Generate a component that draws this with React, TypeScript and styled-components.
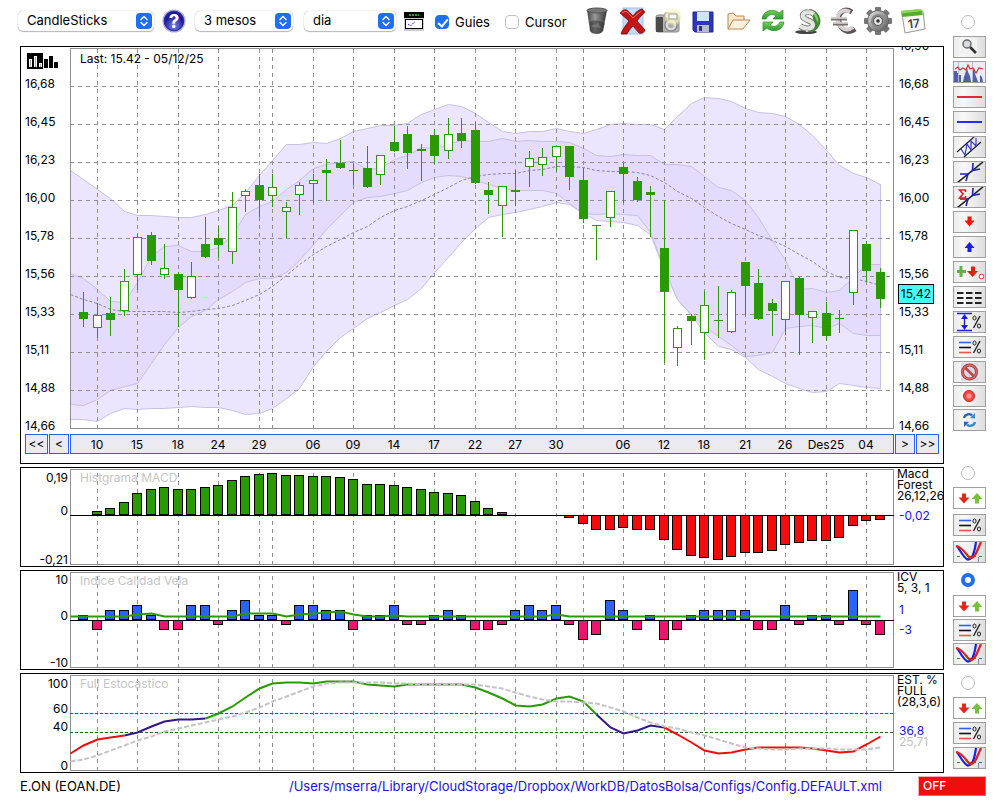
import React from 'react';
import styled, { createGlobalStyle, css } from 'styled-components';

const Global = createGlobalStyle`
  * { box-sizing: border-box; }
  body { margin: 0; background: #fff; color: #000; font: 12px/14px Inter, "Liberation Sans", sans-serif; }
  button, select, input { font: inherit; color: inherit; margin: 0; }
`;

/* ---------- data ---------- */

const LEFT = 70;
const at = (i: number) => LEFT + Math.floor(13.5 * (i + 1));

const grid = [97, 137, 178, 218, 259, 272, 313, 353, 394, 434, 475, 515, 556, 583, 623, 664, 704, 745, 785, 826, 866];

const days: [number, string][] = [
  [97, '10'], [137, '15'], [178, '18'], [218, '24'], [259, '29'], [313, '06'], [353, '09'], [394, '14'],
  [434, '17'], [475, '22'], [515, '27'], [556, '30'], [623, '06'], [664, '12'], [704, '18'], [745, '21'],
  [785, '26'], [826, 'Des25'], [866, '04'],
];

const prices = ['16,68', '16,45', '16,23', '16,00', '15,78', '15,56', '15,33', '15,11', '14,88', '14,66'];

// high, body top, body bottom, low, filled
const candles = [
  [292, 312, 319, 327, 1], [303, 315, 328, 338, 0], [297, 313, 320, 336, 1], [269, 281, 311, 316, 0],
  [234, 237, 275, 290, 0], [232, 235, 261, 265, 1], [244, 268, 275, 279, 0], [272, 274, 290, 327, 1],
  [262, 276, 298, 299, 0], [217, 244, 257, 258, 1], [226, 238, 245, 258, 1], [192, 207, 252, 264, 0],
  [189, 191, 196, 212, 0], [174, 185, 200, 217, 1], [174, 187, 196, 207, 0], [202, 207, 212, 238, 0],
  [182, 185, 195, 215, 0], [174, 180, 184, 203, 0], [159, 170, 173, 201, 1], [140, 163, 168, 169, 1],
  [164, 170, 171, 185, 1], [146, 168, 187, 188, 1], [155, 155, 175, 185, 0], [126, 142, 151, 152, 1],
  [126, 134, 153, 169, 1], [144, 149, 151, 181, 1], [129, 135, 156, 164, 1], [118, 134, 151, 159, 0],
  [118, 133, 141, 148, 1], [122, 130, 183, 184, 1], [182, 190, 195, 214, 1], [186, 186, 206, 237, 0],
  [170, 190, 192, 206, 1], [151, 158, 167, 187, 0], [148, 157, 165, 176, 0], [146, 146, 157, 171, 0],
  [146, 146, 177, 190, 1], [168, 180, 219, 223, 1], [225, 225, 226, 260, 1], [191, 191, 218, 227, 0],
  [163, 167, 174, 203, 1], [177, 181, 200, 202, 1], [186, 192, 195, 237, 1], [200, 248, 292, 363, 1],
  [326, 328, 348, 366, 0], [314, 316, 321, 345, 1], [291, 305, 333, 360, 0], [286, 320, 321, 338, 1],
  [290, 292, 332, 333, 0], [262, 262, 286, 315, 1], [269, 283, 319, 320, 1], [299, 303, 311, 336, 1],
  [281, 281, 320, 335, 0], [277, 278, 315, 355, 1], [311, 311, 318, 343, 0], [302, 313, 336, 341, 1],
  [310, 318, 319, 333, 1], [230, 230, 293, 305, 0], [241, 244, 271, 282, 1], [268, 272, 299, 308, 1],
];

// one value per session, starting at the left edge of the plot
const outerTop = [
  170, 179, 189, 198, 211, 215, 215, 216, 217, 217, 214, 210, 205, 192, 175, 160, 144, 144, 142, 143, 138,
  131, 128, 125, 125, 123, 114, 109, 104, 106, 113, 122, 131, 133, 131, 131, 128, 131, 133, 129, 124,
  123, 124, 124, 129, 116, 103, 97, 98, 101, 108, 112, 113, 116, 124, 135, 150, 165, 173, 177, 184,
];
const outerBottom = [
  419, 419, 421, 413, 408, 409, 408, 408, 407, 406, 407, 407, 410, 414, 413, 408, 398, 388, 366, 351, 337,
  328, 318, 312, 305, 299, 288, 272, 257, 242, 228, 217, 214, 212, 209, 206, 202, 204, 213, 220, 221,
  222, 225, 234, 270, 299, 315, 332, 346, 349, 357, 369, 376, 383, 388, 392, 391, 383, 385, 387, 388,
];
const innerTop = [
  273, 278, 289, 301, 302, 282, 256, 246, 245, 251, 251, 247, 235, 214, 206, 201, 189, 180, 168, 164, 162,
  161, 169, 168, 159, 155, 147, 148, 144, 140, 141, 141, 138, 141, 140, 141, 141, 142, 148, 155, 156,
  154, 155, 155, 164, 164, 166, 176, 187, 190, 200, 217, 240, 260, 289, 288, 292, 290, 277, 264, 264,
];
const innerBottom = [
  404, 405, 399, 390, 386, 383, 363, 344, 327, 316, 310, 299, 291, 282, 278, 278, 272, 260, 244, 229, 215,
  202, 197, 196, 193, 190, 182, 177, 175, 176, 180, 184, 188, 190, 190, 190, 193, 203, 213, 214, 213,
  214, 215, 232, 268, 299, 314, 326, 336, 345, 356, 355, 352, 328, 326, 325, 328, 323, 333, 335, 335,
];
const middle = [
  294, 299, 303, 309, 311, 311, 311, 311, 312, 311, 309, 308, 305, 300, 294, 286, 275, 264, 254, 246, 239,
  232, 226, 217, 210, 206, 200, 194, 187, 180, 176, 174, 173, 173, 170, 169, 166, 166, 167, 170, 171,
  171, 172, 175, 182, 191, 198, 207, 216, 223, 229, 235, 240, 246, 254, 261, 271, 277, 278, 281, 285,
];

const macd = [
  0, 4, 7, 13, 22, 26, 28, 26, 26, 28, 30, 35, 39, 41, 42, 40, 40, 39, 39, 38, 36, 31, 31, 30, 28, 26, 23, 22,
  20, 14, 7, 3, 0, 0, 0, 0, -3, -9, -15, -15, -13, -15, -15, -25, -35, -41, -43, -45, -42, -38, -38, -36, -30,
  -28, -26, -26, -23, -11, -6, -5,
];
const icv = [
  1, -2, 2, 2, 3, 1, -2, -2, 3, 3, -1, 2, 4, 1, 1, -1, 3, 3, 2, 2, -2, 1, 1, 3, -1, -1, 1, 2, 1, -2, -2, -1,
  2, 3, 2, 3, -1, -4, -3, 4, 2, -2, 1, -4, -2, 1, 2, 2, 2, 2, -2, -2, 3, -1, 1, 1, -1, 6, -1, -3,
];
const icvLine = Array.from({ length: 61 }, (_, k) =>
  ({ 5: 614, 6: 613, 13: 613, 14: 613, 15: 613, 17: 614, 18: 613, 19: 612, 20: 611, 21: 614, 24: 615, 36: 614 } as Record<number, number>)[k] ?? 616);

const stoch = [
  753, 745, 739, 737, 735, 732, 726, 721, 719, 719, 718, 713, 706, 697, 688, 683, 682, 682, 683, 681, 681,
  681, 684, 685, 686, 684, 684, 684, 684, 684, 687, 692, 698, 705, 706, 704, 698, 696, 701, 714, 727,
  733, 730, 725, 727, 734, 742, 750, 753, 752, 749, 747, 747, 747, 747, 748, 750, 752, 751, 744, 736,
];
const signal = [
  761, 759, 755, 750, 745, 740, 736, 731, 728, 725, 722, 719, 716, 712, 707, 701, 696, 691, 686, 683, 682,
  682, 682, 682, 683, 683, 684, 684, 684, 684, 684, 686, 688, 692, 696, 699, 701, 701, 702, 703, 707,
  711, 717, 722, 726, 728, 732, 735, 739, 743, 747, 748, 749, 749, 748, 748, 748, 749, 749, 749, 747,
];

const points = (ys: number[], from = 0) => ys.map((y, k) => `${at(k + from - 1) + 0.5},${y + 0.5}`);
const line = (ys: number[], from = 0) => points(ys, from).join(' ');
const band = (top: number[], bottom: number[]) => [...points(top), ...points(bottom).reverse()].join(' ');

/* ---------- layout ---------- */

const Page = styled.div`
  display: grid;
  grid-template-columns: minmax(0, 1fr) 33px;
  column-gap: 9px;
  padding: 0 14px 4px 20px;
`;
const Main = styled.main`
  display: flex;
  flex-direction: column;
`;
const Toolbar = styled.header`
  display: flex;
  align-items: center;
  height: 46px;
  margin-left: -2px;
  padding-bottom: 4px;
`;
const Panels = styled.div`
  display: grid;
  gap: 3px;
`;
const Panel = styled.section`
  border: 1px solid #000;
  overflow: hidden;
`;
const PlotRow = styled.div`
  display: grid;
  grid-template-columns: 49px minmax(0, 1fr) 49px;
`;
const Plot = styled.div`
  position: relative;
`;
const Drawing = styled.svg<{ $height: number }>`
  display: block;
  width: 100%;
  height: ${p => p.$height}px;
`;
const Title = styled.h2<{ $dim?: boolean }>`
  position: absolute;
  top: ${p => (p.$dim ? 3 : 5)}px;
  left: 10px;
  margin: 0;
  font-size: 12px;
  line-height: 14px;
  font-weight: 400;
  color: ${p => (p.$dim ? '#c4c4c4' : '#000')};
`;

/* ---------- price panel ---------- */

const PriceAxis = styled.div<{ $right?: boolean }>`
  position: relative;
  height: 382px;
  padding-left: ${p => (p.$right ? 5 : 4)}px;
  line-height: 38px;
`;
const PriceIcon = styled.div`
  height: 18px;
  padding: 6px 2px;
  line-height: 0;
`;
const PriceLabel = styled.div<{ $cut?: boolean }>`
  height: 38px;
  ${p => p.$cut && css`margin-top: -20px;`}
`;
const LastPrice = styled.output`
  position: absolute;
  top: 237px;
  left: 4px;
  width: 36px;
  height: 20px;
  border: 1px solid #000;
  background: #48fbfb;
  line-height: 18px;
  text-align: center;
`;
const DateRow = styled.nav`
  display: grid;
  grid-template-columns: 23px 20px minmax(0, 1fr) 20px 23px;
  gap: 1px;
  padding: 5px 4px 9px;
`;
const DateButton = styled.button`
  height: 20px;
  padding: 0;
  border: 1px solid #2a62f0;
  background: #eaeaf0;
  line-height: 18px;
`;
const DateStrip = styled.div`
  border: 1px solid #2a62f0;
  background: #eaeaf0;
`;

/* ---------- indicator panels ---------- */

const ValueAxis = styled.div<{ $rows: string }>`
  display: grid;
  grid-template-rows: ${p => p.$rows};
  align-items: end;
  justify-items: end;
  padding-right: 2px;
  line-height: 12px;
`;
const Legend = styled.div`
  padding-left: 3px;
  line-height: 11px;
  white-space: pre;
`;
const Reading = styled.div<{ $gap: number; $color?: string }>`
  margin-top: ${p => p.$gap}px;
  padding-left: 2px;
  color: ${p => p.$color ?? '#1a10f0'};
`;

/* ---------- toolbar parts ---------- */

const Picker = styled.label<{ $width: number; $gap: number }>`
  display: grid;
  width: ${p => p.$width}px;
  height: 20px;
  margin-right: ${p => p.$gap}px;
  > * { grid-area: 1 / 1; }
  svg { justify-self: end; align-self: center; margin-right: 2px; pointer-events: none; }
`;
const Select = styled.select`
  appearance: none;
  width: 100%;
  height: 20px;
  padding: 0 24px 2px 9px;
  border: 0;
  border-radius: 5px;
  background: #fff;
  box-shadow: 0 0 1px rgba(0, 0, 0, 0.45), 0 1px 1px rgba(0, 0, 0, 0.25);
  font-size: 13px;
`;
const IconButton = styled.button<{ $width: number; $gap?: number }>`
  width: ${p => p.$width}px;
  height: 30px;
  margin-right: ${p => p.$gap ?? 0}px;
  padding: 0;
  border: 0;
  background: none;
  display: flex;
  align-items: center;
  justify-content: center;
  flex: none;
`;
const Check = styled.label<{ $width: number }>`
  display: flex;
  align-items: center;
  gap: 6px;
  width: ${p => p.$width}px;
  padding-top: 2px;
  font-size: 13px;
`;
const CheckBox = styled.input`
  appearance: none;
  width: 14px;
  height: 14px;
  border: 1px solid #c2c2c2;
  border-radius: 4px;
  display: grid;
  &:checked { border-color: #1f6ef6; background: #1f6ef6; }
  &:checked::after {
    content: '';
    width: 4px;
    height: 8px;
    margin: 1px 4px;
    border: solid #fff;
    border-width: 0 2px 2px 0;
    transform: rotate(40deg);
  }
`;
const Tools = styled.div`
  display: flex;
  margin-left: auto;
  padding-right: 14px;
`;

/* ---------- side column ---------- */

const Side = styled.aside`
  display: flex;
  flex-direction: column;
`;
const Group = styled.div<{ $top: number; $gap: number }>`
  display: grid;
  gap: ${p => p.$gap}px;
  margin-top: ${p => p.$top}px;
`;
const Radio = styled.input<{ $top: number }>`
  appearance: none;
  width: 14px;
  height: 14px;
  margin: ${p => p.$top}px auto 0 8px;
  border: 1px solid #b8b8b8;
  border-radius: 50%;
  background: #fff;
  &:checked { border: 4px solid #1f6ef6; }
`;
const SideButton = styled.button<{ $white?: boolean }>`
  height: 22px;
  padding: 0;
  border: 1px solid #a0a0a0;
  background: ${p => (p.$white ? '#fff' : 'linear-gradient(90deg, #ebebeb, #f8f8f8 30%, #dedede)')};
  svg { display: block; }
`;

/* ---------- footer ---------- */

const Footer = styled.footer`
  display: flex;
  justify-content: space-between;
  grid-column: 1 / -1;
  padding-top: 3px;
  font-size: 13px;
  line-height: 20px;
`;
const FilePath = styled.a`
  margin-left: auto;
  margin-right: 36px;
  color: #1a10e8;
  text-decoration: none;
`;
const OffButton = styled.button`
  width: 68px;
  height: 20px;
  padding: 0 4px;
  border: 1px solid #8a8a8a;
  border-top-color: #f5b0b0;
  border-left-color: #f5b0b0;
  background: #f20c0c;
  color: #fff;
  font-size: 12px;
  font-weight: 500;
  line-height: 16px;
  text-align: left;
`;

/* ---------- side icons, drawn on 31x20 ---------- */

const percent = (
  <g stroke="#222" fill="none">
    <path d="M19.5 16 26 4" strokeWidth="1.4" />
    <ellipse cx="20.5" cy="6" rx="1.6" ry="2" />
    <ellipse cx="25" cy="14" rx="1.6" ry="2" />
  </g>
);
const cross = (
  <>
    <path d="M3 21 29 0" stroke="#222" strokeWidth="1.6" />
    <path d="M6 12 14 12 12 19M19 1 18.500 8.500 26 7" stroke="#22b" strokeWidth="1.600" fill="none" />
  </>
);
const percentLines = (
  <>
    <path d="M5 5.500H17" stroke="#2a62f0" strokeWidth="1.600" />
    <path d="M5 10.500H17" stroke="#111" strokeWidth="1.600" />
    <path d="M5 15.500H17" stroke="#ef5442" strokeWidth="1.600" />
    {percent}
  </>
);
const arrows = (
  <>
    <path d="M8 5.500H12V9.500H15.500L10 15.500 4.500 9.500H8Z" fill="#e0281c" />
    <path d="M21 15.500H25V11H28.500L23 5 17.500 11H21Z" fill="#76c23c" />
  </>
);
const curves = (
  <>
    <path d="M3 14.500H29" stroke="#2d8a3a" strokeDasharray="3 4 1 3" />
    <path d="M24.500 15v5" stroke="#88a" />
    <path d="M3 4C6 8 9 15 13.500 17.500 18 18 20 11 21 6L22 0" stroke="#1424e8" strokeWidth="2.200" fill="none" />
    <path d="M2 4C8 5 12 12 15 15 19 18 22 12 24 7L27 0" stroke="#e02020" strokeWidth="2.200" fill="none" />
  </>
);

const sideIcons: Record<string, React.ReactNode> = {
  'Zoom': (
    <>
      <rect x="7" y="2" width="16" height="16" fill="#f2f2f2" />
      <path d="M16 10 22 16" stroke="#333" strokeWidth="2.600" />
      <circle cx="13" cy="7" r="4" fill="#d8dce0" stroke="#666" strokeWidth="1.400" />
    </>
  ),
  'Histogram': (
    <>
      <rect width="31" height="20" fill="#ececf4" />
      <path d="M0 20V9H3V11H5V13H7V20H9L10 15 12 9 13 6 14 10 16 14 17 20H19V9L20 6 21 12 23 17 24 20H26V13L28 15 29 20Z" fill="#5160a8" />
      <path d="M4.500 0V20M18.500 0V20" stroke="#b4b8d8" />
      <path d="M1 7 4 5 6 8 9 6 12 8 14 3 16 7 19 6 22 11 25 6 29 7" stroke="#dc3030" fill="none" strokeWidth="1.200" />
    </>
  ),
  'Red line': <path d="M3 10H28" stroke="#e12b2b" strokeWidth="2" />,
  'Blue line': <path d="M3 10H28" stroke="#2230f0" strokeWidth="2" />,
  'Channel': (
    <>
      <path d="M3 15 20 0M10 20 27 5" stroke="#222" strokeWidth="1.300" />
      <path d="M7 12 11 18 13 7 17 13 17 4 22 9 22 1" stroke="#2a2ad0" fill="none" strokeWidth="1.100" />
    </>
  ),
  'Trend line': cross,
  'Regression line': (
    <>
      {cross}
      <path d="M11.500 5V3H5.500L9 7 5.500 11H11.500V9" stroke="#e01c1c" strokeWidth="1.600" fill="none" />
    </>
  ),
  'Sell mark': <path d="M13.500 4.500H17.500V8.500H20.500L15.500 14.500 10.500 8.500H13.500Z" fill="#f0140c" />,
  'Buy mark': <path d="M13.500 15H17.500V11H20.500L15.500 5 10.500 11H13.500Z" fill="#1c1cf0" />,
  'Signals': (
    <>
      <path d="M7 4V15M3 9.500H12" stroke="#68ae44" strokeWidth="3" />
      <path d="M17 4.500H21V9H24L18.500 15 13 9H17Z" fill="#e0200f" />
      <circle cx="27.500" cy="14.500" r="2.300" stroke="#e03030" fill="#fff" />
    </>
  ),
  'Dashes': <path d="M3 6H28M3 11H28M3 16H28" stroke="#222" strokeWidth="1.800" strokeDasharray="6.500 2.500" />,
  'Range percent': (
    <>
      <path d="M3 1.500H18M3 18.500H18M10.500 4V16" stroke="#1c1cf0" strokeWidth="1.400" />
      <path d="M10.500 2 14 7H7ZM10.500 18 14 13H7Z" fill="#1c1cf0" />
      {percent}
    </>
  ),
  'Levels percent': percentLines,
  'Forbid': (
    <>
      <rect x="7" y="1" width="17" height="18" fill="#d6dae6" />
      <circle cx="15.500" cy="10" r="7" fill="none" stroke="#a83434" strokeWidth="3" />
      <circle cx="15.500" cy="10" r="7" fill="none" stroke="#d66c6c" strokeWidth="1.400" />
      <path d="M11 5.500 20 14.500" stroke="#c04a4a" strokeWidth="2.600" />
    </>
  ),
  'Record': (
    <>
      <circle cx="15" cy="10" r="5.500" fill="#f04848" stroke="#d81c1c" />
      <circle cx="15" cy="10" r="2.600" fill="#f79292" />
    </>
  ),
  'Sync': (
    <>
      <path d="M10 8C11 4 16 3 18 5.500" stroke="#2a62b8" strokeWidth="2.400" fill="none" />
      <path d="M16 8 21 8.500 21 3Z" fill="#3a86d8" />
      <path d="M21 12C20 16 15 17 13 14.500" stroke="#2f8ad8" strokeWidth="2.400" fill="none" />
      <path d="M15 12 10 11.500 10 17Z" fill="#2a62b8" />
    </>
  ),
};

const SideIcon = ({ name, white, children }: { name: string; white?: boolean; children: React.ReactNode }) => (
  <SideButton type="button" aria-label={name} $white={white}>
    <svg width="31" height="20" viewBox="0 0 31 20">{children}</svg>
  </SideButton>
);

const IndicatorTools = ({ top, buttonsTop, gap, name, checked }: { top: number; buttonsTop: number; gap: number; name: string; checked?: boolean }) => (
  <>
    <Radio type="radio" name="panel" aria-label={name} $top={top} defaultChecked={checked} />
    <Group $top={buttonsTop} $gap={gap}>
      <SideIcon name={`${name} signals`} white>{arrows}</SideIcon>
      <SideIcon name={`${name} levels`}>{percentLines}</SideIcon>
      <SideIcon name={`${name} curves`}>{curves}</SideIcon>
    </Group>
  </>
);

/* ---------- toolbar icons ---------- */

const Gradients = () => (
  <svg width="0" height="0" style={{ position: 'absolute' }} aria-hidden="true">
    <defs>
      <linearGradient id="metal" x2="1" y2="1"><stop offset="0" stopColor="#eee" /><stop offset=".5" stopColor="#999" /><stop offset="1" stopColor="#555" /></linearGradient>
      <linearGradient id="bin"><stop offset="0" stopColor="#444" /><stop offset=".4" stopColor="#999" /><stop offset="1" stopColor="#333" /></linearGradient>
      <linearGradient id="green" x2="0" y2="1"><stop offset="0" stopColor="#7cd25a" /><stop offset="1" stopColor="#259a2c" /></linearGradient>
      <radialGradient id="ball" cy=".75"><stop offset="0" stopColor="#7d86f0" /><stop offset="1" stopColor="#1d1c96" /></radialGradient>
      <radialGradient id="flash"><stop offset="0" stopColor="#fffef0" /><stop offset=".65" stopColor="#f5f3b8" /><stop offset="1" stopColor="#efe9a0" stopOpacity=".2" /></radialGradient>
    </defs>
  </svg>
);

const Stepper = () => (
  <svg width="16" height="16" viewBox="0 0 16 16" aria-hidden="true">
    <rect width="16" height="16" rx="4" fill="#1f6ef6" />
    <path d="M5 6.500 8 3.500 11 6.500M5 9.500 8 12.500 11 9.500" stroke="#fff" strokeWidth="1.400" fill="none" strokeLinecap="round" strokeLinejoin="round" />
  </svg>
);

const teeth = Array.from({ length: 8 }, (_, k) => k * 45);

const toolIcons: [string, React.ReactNode][] = [
  ['Delete', (
    <>
      <path d="M3 3 6 24C8 28 17 28 19 24L23 3Z" fill="url(#bin)" />
      <ellipse cx="13" cy="3.500" rx="10" ry="2.500" fill="#777" stroke="#555" />
      <path d="M6 15C10 12 17 14 21 16L19 24C16 28 9 28 6 24Z" fill="#2b2b2b" opacity=".5" />
      <path d="M7 20C10 15 13 20 14 15L17 21Z" fill="#999" opacity=".4" />
    </>
  )],
  ['Remove all', (
    <>
      <rect x="4" y="1" width="20" height="26" fill="#c2dcfb" stroke="#9cc2f2" />
      <path d="M1 6C3 3 6 2 8 3L14 9C16 6 19 3 23 2L26 5C23 8 20 11 18 14L26 23C26 25 22 27 20 26L14 19C11 22 9 25 8 27H2C3 23 7 18 10 14Z" fill="#c41414" stroke="#7a0a0a" strokeWidth=".800" />
      <path d="M3 6 7 4 14 11 22 4" stroke="#ee7468" fill="none" />
    </>
  )],
  ['Snapshot', (
    <>
      <rect x="2" y="8" width="23" height="17" rx="2" fill="#b4b4b0" stroke="#8a8a86" />
      <rect x="2" y="10" width="7" height="15" fill="#4a4a48" />
      <rect x="11" y="6" width="10" height="5" fill="#eee" stroke="#999" />
      <circle cx="17" cy="18" r="6" fill="#ddd" stroke="#888" strokeWidth="1.400" />
      <circle cx="17" cy="18" r="3" fill="#aaa" />
      <circle cx="19" cy="10" r="9" fill="url(#flash)" opacity=".75" />
      <rect x="15" y="7" width="8" height="5" fill="#fff" stroke="#999" />
    </>
  )],
  ['Save', (
    <>
      <path d="M4 5H24V25H6L4 23Z" fill="#2f36b8" stroke="#22268c" />
      <rect x="8" y="5" width="12" height="9" fill="#cfe6fa" />
      <rect x="8" y="18" width="12" height="7" fill="#b8bccc" />
      <rect x="10" y="19" width="3" height="5" fill="#2b2f9e" />
    </>
  )],
  ['Open', (
    <>
      <path d="M4 22V7L9 6 12 9H20V13" fill="#fbe8cc" stroke="#b98a50" strokeLinejoin="round" />
      <path d="M4 22 9 13H26L19 22Z" fill="#fdf1de" stroke="#b98a50" strokeLinejoin="round" />
    </>
  )],
  ['Reload', (
    <>
      <path d="M3 12C4 3 15 1 20 6L24 3V12H14L17 9C13 6 9 8 7 12Z" fill="url(#green)" stroke="#2c8a2a" strokeWidth=".700" />
      <path d="M25 15C24 24 13 26 8 21L4 24V15H14L11 18C15 21 19 19 21 15Z" fill="url(#green)" stroke="#2c8a2a" strokeWidth=".700" />
    </>
  )],
  ['Dollar', (
    <>
      <ellipse cx="12" cy="25" rx="11" ry="2" fill="#222" opacity=".85" />
      <path d="M16 2C24 4 28 11 26 17 24 23 19 26 14 25L20 15Z" fill="#3f8a2c" />
      <path d="M17 3C23 6 25 11 24 16L20 8Z" fill="#8cc47a" />
      <path d="M20 7C14 3 7 6 9 10 11 14 19 13 19 18 18 23 10 22 6 19" stroke="#6c7068" strokeWidth="6" fill="none" />
      <path d="M20 7C14 3 7 6 9 10 11 14 19 13 19 18 18 23 10 22 6 19" stroke="#e2e6de" strokeWidth="4.200" fill="none" />
      <path d="M14 2V5M13 22V25" stroke="#c8ccc4" strokeWidth="2.400" />
    </>
  )],
  ['Euro', (
    <>
      <path d="M23 5C15 0 8 6 10 15 12 24 20 27 26 22" stroke="#5a5456" strokeWidth="5" fill="none" />
      <path d="M21 5C14 1 7 6 9 14 11 22 18 25 24 20" stroke="#d6d2d4" strokeWidth="4" fill="none" />
      <path d="M2 12H18M4 17H19" stroke="#77706f" strokeWidth="3" />
      <path d="M2 11H18M4 16H19" stroke="#dcd8da" strokeWidth="1.600" />
    </>
  )],
  ['Settings', (
    <>
      {teeth.map(a => <rect key={a} x="11" y="0" width="6" height="8" rx="1" fill="#777" transform={`rotate(${a} 14 14)`} />)}
      <circle cx="14" cy="14" r="10.500" fill="url(#metal)" stroke="#666" />
      <circle cx="14" cy="14" r="7" fill="#8a8a8a" />
      <circle cx="14" cy="14" r="4.500" fill="#e4e4e4" stroke="#555" />
      <circle cx="14" cy="14" r="1.800" fill="#333" />
    </>
  )],
  ['Calendar', (
    <>
      <path d="M3 7 24 4 26 22 6 26Z" fill="#fafafa" stroke="#999" />
      <path d="M2 4 22 2 24 8 3 10Z" fill="#58ac2c" />
      <path d="M2 4 22 2 22.500 4 2.500 6.500Z" fill="#8ed65a" />
      <text x="15" y="21" fontSize="12" fontWeight="600" textAnchor="middle" fill="#444" transform="rotate(-7 14 17)">17</text>
    </>
  )],
];

/* ---------- chart pieces ---------- */

const Grid = ({ top, bottom }: { top: number; bottom: number }) => (
  <g stroke="#8f8f8f" strokeDasharray="4 4" shapeRendering="crispEdges">
    {grid.map(x => <path key={x} d={`M${x + 0.5} ${top}V${bottom}`} />)}
  </g>
);
const Frame = ({ top, bottom }: { top: number; bottom: number }) => (
  <path d={`M70.500 ${top + 0.5}H893.500V${bottom + 0.5}H70.500Z`} fill="none" stroke="#8f8f8f" shapeRendering="crispEdges" />
);
const Bars = ({ heights, zero, up, down }: { heights: number[]; zero: number; up: string; down: string }) => (
  <g stroke="#000" shapeRendering="crispEdges">
    {heights.map((h, i) => h !== 0 && (
      <rect key={i} x={at(i) - 4.5} y={(h > 0 ? zero - h : zero) + 0.5} width="9" height={h > 0 ? h - 1 : -h - 1} fill={h > 0 ? up : down} />
    ))}
    <path d={`M70 ${zero + 0.5}H894`} />
  </g>
);
const Chart = ({ top, height, children }: { top: number; height: number; children: React.ReactNode }) => (
  <Drawing $height={height} viewBox={`70 ${top} 824 ${height}`} preserveAspectRatio="none" aria-hidden="true">{children}</Drawing>
);

const PriceChart = () => (
  <Chart top={47} height={382}>
    <polygon points={band(outerTop, outerBottom)} fill="#ebe6fe" stroke="#c6c1e4" />
    <polygon points={band(innerTop, innerBottom)} fill="#e4dbfd" stroke="#c6c1e4" />
    <Grid top={49} bottom={430} />
    <g stroke="#8f8f8f" strokeDasharray="4 4" shapeRendering="crispEdges">
      {prices.slice(0, 9).map((p, k) => <path key={p} d={`M70 ${86.5 + 38 * k}H894`} />)}
    </g>
    <Frame top={48} bottom={428} />
    <polyline points={line(middle)} fill="none" stroke="#8b84a0" strokeDasharray="3 2" />
    <g stroke="#2a9a04" shapeRendering="crispEdges">
      {candles.map(([high, top, bottom, low, filled], i) => (
        <g key={i}>
          <path d={`M${at(i) + 0.5} ${high}V${low}`} />
          <rect x={at(i) - 3.5} y={top + 0.5} width="8" height={bottom - top - 1} fill={filled ? '#2a9a04' : '#fff'} />
          {bottom - top === 1 && <path d={`M${at(i) - 4} ${top + 0.5}H${at(i) + 5}`} />}
        </g>
      ))}
    </g>
  </Chart>
);

const stochRuns: [number, number, string][] = [[0, 4, '#f20c0c'], [4, 10, '#33168a'], [10, 39, '#2a9a04'], [39, 44, '#33168a'], [44, 60, '#f20c0c']];

const options = (items: string[]) => items.map(o => <option key={o}>{o}</option>);

export default function App() {
  return (
    <>
      <Global />
      <Gradients />
      <Page>
        <Main>
          <Toolbar>
            <Picker $width={136} $gap={8}>
              <Select aria-label="Chart type">{options(['CandleSticks'])}</Select>
              <Stepper />
            </Picker>
            <IconButton type="button" aria-label="Help" $width={24} $gap={9}>
              <svg width="24" height="24" viewBox="0 0 24 24">
                <circle cx="12" cy="12" r="11.500" fill="#a5a8dc" />
                <circle cx="12" cy="12" r="9.800" fill="url(#ball)" stroke="#2a2a9c" />
                <text x="12" y="19" fontSize="19" fontWeight="700" textAnchor="middle" fill="#fff">?</text>
              </svg>
            </IconButton>
            <Picker $width={98} $gap={11}>
              <Select aria-label="Period">{options(['3 mesos'])}</Select>
              <Stepper />
            </Picker>
            <Picker $width={92} $gap={8}>
              <Select aria-label="Interval">{options(['dia'])}</Select>
              <Stepper />
            </Picker>
            <IconButton type="button" aria-label="Play" $width={20} $gap={11}>
              <svg width="20" height="19" viewBox="0 0 20 19">
                <rect width="20" height="19" fill="#ccc" />
                <rect width="20" height="6" fill="#000" />
                <path d="M5 3H15" stroke="#2ca02c" strokeDasharray="2 1" strokeWidth="2" />
                <rect x="1.500" y="7.500" width="17" height="9" fill="#fff" stroke="#000" />
                <path d="M4 12 6.500 14 11 9.500" stroke="#2222e0" fill="none" strokeDasharray="2 1" />
              </svg>
            </IconButton>
            <Check $width={70}><CheckBox type="checkbox" defaultChecked />Guies</Check>
            <Check $width={70}><CheckBox type="checkbox" />Cursor</Check>
            <Tools>
              {toolIcons.map(([name, icon]) => (
                <IconButton key={name} type="button" aria-label={name} $width={35}>
                  <svg width="28" height="28" viewBox="0 0 28 28">{icon}</svg>
                </IconButton>
              ))}
            </Tools>
          </Toolbar>

          <Panels>
            <Panel aria-label="Price">
              <PlotRow>
                <PriceAxis>
                  <PriceIcon>
                    <svg width="32" height="16" viewBox="0 0 32 16" shapeRendering="crispEdges">
                      <rect width="16" height="16" />
                      <path d="M2 6H5V14H2ZM7 3H10V14H7ZM12 10H15V14H12Z" fill="#fff" />
                      <path d="M3 7H4V14H3ZM8 4H9V14H8ZM13 11H14V14H13Z" fill="#aaa" />
                      <path d="M17 6H21V15H17ZM22 3H26V15H22ZM27 9H31V15H27Z" />
                    </svg>
                  </PriceIcon>
                  {prices.map(p => <PriceLabel key={p}>{p}</PriceLabel>)}
                </PriceAxis>
                <Plot>
                  <PriceChart />
                  <Title>Last: 15.42 - 05/12/25</Title>
                </Plot>
                <PriceAxis $right>
                  <PriceLabel $cut>16,90</PriceLabel>
                  {prices.map(p => <PriceLabel key={p}>{p}</PriceLabel>)}
                  <LastPrice>15,42</LastPrice>
                </PriceAxis>
              </PlotRow>
              <DateRow aria-label="Dates">
                <DateButton type="button">&lt;&lt;</DateButton>
                <DateButton type="button">&lt;</DateButton>
                <DateStrip>
                  <Drawing $height={18}>
                    {days.map(([x, label]) => (
                      <text key={x} x={`${((x - 71) / 822) * 100}%`} y="14" textAnchor="middle">{label}</text>
                    ))}
                  </Drawing>
                </DateStrip>
                <DateButton type="button">&gt;</DateButton>
                <DateButton type="button">&gt;&gt;</DateButton>
              </DateRow>
            </Panel>

            <Panel aria-label="MACD">
              <PlotRow>
                <ValueAxis $rows="16px 33px 49px"><span>0,19</span><span>0</span><span>-0,21</span></ValueAxis>
                <Plot>
                  <Title $dim>Histgrama MACD</Title>
                  <Chart top={468} height={98}>
                    <Grid top={473} bottom={566} />
                    <Frame top={469} bottom={564} />
                    <Bars heights={macd} zero={515} up="#2a9a04" down="#f20c0c" />
                  </Chart>
                </Plot>
                <Legend>{'Macd\nForest\n26,12,26'}<Reading $gap={9}>-0,02</Reading></Legend>
              </PlotRow>
            </Panel>

            <Panel aria-label="ICV">
              <PlotRow>
                <ValueAxis $rows="15px 36px 47px"><span>10</span><span>0</span><span>-10</span></ValueAxis>
                <Plot>
                  <Title $dim>Indice Calidad Vela</Title>
                  <Chart top={571} height={98}>
                    <Grid top={576} bottom={669} />
                    <Frame top={572} bottom={667} />
                    <Bars heights={icv.map(v => v * 5)} zero={620} up="#2a62fa" down="#f0146e" />
                    <polyline points={line(icvLine)} fill="none" stroke="#2a9a04" strokeWidth="2" />
                  </Chart>
                </Plot>
                <Legend>{'ICV\n5, 3, 1'}<Reading $gap={11}>1</Reading><Reading $gap={9}>-3</Reading></Legend>
              </PlotRow>
            </Panel>

            <Panel aria-label="Stochastic">
              <PlotRow>
                <ValueAxis $rows="16px 25px 18px 39px"><span>100</span><span>60</span><span>40</span><span>0</span></ValueAxis>
                <Plot>
                  <Title $dim>Full Estocastico</Title>
                  <Chart top={674} height={98}>
                    <Grid top={679} bottom={772} />
                    <Frame top={675} bottom={770} />
                    <path d="M70 713.500H894" stroke="#f20c0c" strokeDasharray="3 2" />
                    <path d="M70 732.500H894" stroke="#1c6a10" strokeDasharray="3 2" />
                    {stochRuns.map(([a, b, color]) => (
                      <polyline key={a} points={line(stoch.slice(a, b + 1), a)} fill="none" stroke={color} strokeWidth="2" />
                    ))}
                    <polyline points={line(signal)} fill="none" stroke="#c4c4c4" strokeWidth="2" strokeDasharray="5 2" />
                  </Chart>
                </Plot>
                <Legend>
                  {'EST. %\nFULL\n(28,3,6)'}
                  <Reading $gap={18}>36,8</Reading>
                  <Reading $gap={0} $color="#c0c0c0">25,71</Reading>
                </Legend>
              </PlotRow>
            </Panel>
          </Panels>
        </Main>

        <Side>
          <Radio type="radio" name="panel" aria-label="Price" $top={15} />
          <Group $top={7} $gap={3}>
            {Object.keys(sideIcons).slice(0, 13).map(n => <SideIcon key={n} name={n}>{sideIcons[n]}</SideIcon>)}
          </Group>
          <Group $top={3} $gap={2}>
            {Object.keys(sideIcons).slice(13).map(n => <SideIcon key={n} name={n}>{sideIcons[n]}</SideIcon>)}
          </Group>
          <IndicatorTools name="MACD" top={35} buttonsTop={7} gap={5} />
          <IndicatorTools name="ICV" top={10} buttonsTop={8} gap={2} checked />
          <IndicatorTools name="Stochastic" top={11} buttonsTop={7} gap={3} />
        </Side>

        <Footer>
          <span>E.ON (EOAN.DE)</span>
          <FilePath href="#config">/Users/mserra/Library/CloudStorage/Dropbox/WorkDB/DatosBolsa/Configs/Config.DEFAULT.xml</FilePath>
          <OffButton type="button">OFF</OffButton>
        </Footer>
      </Page>
    </>
  );
}
